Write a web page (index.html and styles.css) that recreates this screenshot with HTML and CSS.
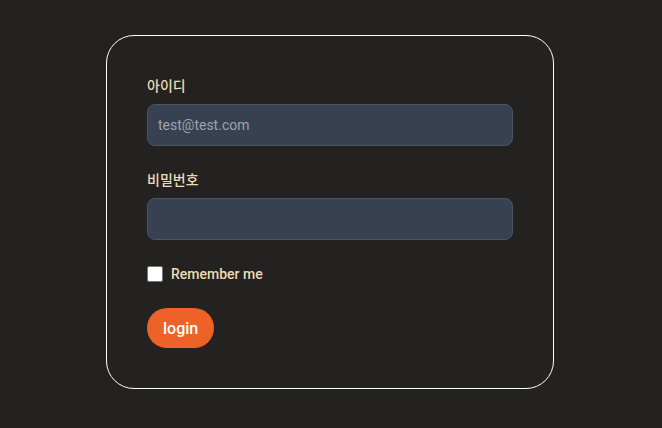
FILE: index.html
```html
<!DOCTYPE html>
<html lang="ko">
<head>
<meta charset="utf-8">
<link rel="stylesheet" href="styles.css">
</head>
<body>
<div class="page">
  <form class="card">
    <div class="field">
      <label class="label" for="id">아이디</label>
      <input class="input" id="id" type="text" placeholder="test@test.com">
    </div>
    <div class="field">
      <label class="label" for="pw">비밀번호</label>
      <input class="input" id="pw" type="password">
    </div>
    <label class="remember">
      <span class="box"></span>
      <span>Remember me</span>
    </label>
    <button class="btn" type="button">login</button>
  </form>
</div>
</body>
</html>
```
FILE: styles.css
```css
html, body {
  margin: 0;
  padding: 0;
  background: #242220;
  font-family: Roboto, "Noto Sans CJK KR", sans-serif;
}
.page {
  padding: 35px 0 0 106px;
}
.card {
  width: 366px;
  padding: 40px;
  border: 1px solid #ffffff;
  border-radius: 28px;
  display: flex;
  flex-direction: column;
  gap: 24px;
}
.field {
  display: flex;
  flex-direction: column;
  gap: 8px;
}
.label {
  font-size: 14px;
  line-height: 20px;
  font-weight: 500;
  color: #e9dcb7;
}
.input {
  box-sizing: border-box;
  width: 100%;
  height: 42px;
  margin: 0;
  padding: 0 10px;
  background: #374151;
  border: 1px solid #4b5563;
  border-radius: 8px;
  font-family: Roboto, sans-serif;
  font-size: 14px;
  color: #e5e7eb;
  outline: none;
}
.input::placeholder {
  color: #9ca3af;
}
.remember {
  display: flex;
  align-items: center;
  gap: 8px;
  height: 20px;
  font-size: 14px;
  font-weight: 500;
  color: #e9dcb7;
}
.box {
  box-sizing: border-box;
  width: 16px;
  height: 16px;
  background: #ffffff;
  border: 1px solid #767676;
  border-radius: 2px;
}
.btn {
  align-self: flex-start;
  height: 40px;
  padding: 0 16px;
  border: none;
  border-radius: 20px;
  background: #ee6129;
  color: #ffffff;
  font-family: Roboto, sans-serif;
  font-size: 16px;
  font-weight: 500;
}
```
